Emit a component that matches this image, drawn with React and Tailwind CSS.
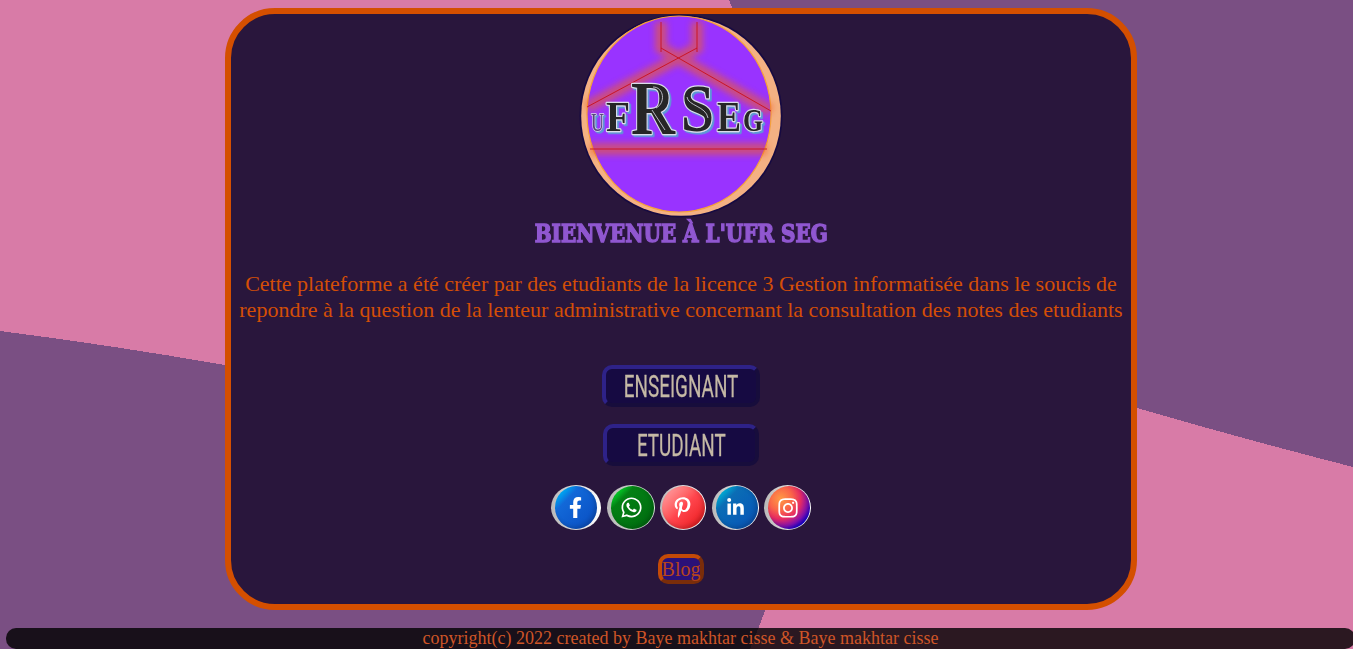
import { FaFacebookF, FaWhatsapp, FaPinterestP, FaLinkedinIn, FaInstagram } from 'react-icons/fa';

const beams = [
  'M661 22V52',
  'M697 22V52',
  'M661 48L771 111',
  'M697 48L587 107',
  'M590 149H767',
];

const letters = [
  { c: 'U', x: 591, y: 131, size: 25, w: 13, light: true },
  { c: 'F', x: 606, y: 131, size: 43, w: 24 },
  { c: 'R', x: 631, y: 134, size: 76, w: 44 },
  { c: 'S', x: 681, y: 131, size: 67, w: 33 },
  { c: 'E', x: 717, y: 131, size: 42, w: 24 },
  { c: 'G', x: 743, y: 131, size: 32, w: 20 },
];

function Logo() {
  return (
    <svg viewBox="579 14 204 204" className="block h-[204px] w-[204px] shrink-0" role="img" aria-label="UFR SEG">
      <defs>
        <filter id="glow" x="570" y="0" width="220" height="220" filterUnits="userSpaceOnUse">
          <feGaussianBlur stdDeviation="3" />
        </filter>
        <filter id="edge" x="570" y="60" width="220" height="100" filterUnits="userSpaceOnUse">
          <feDropShadow dx="1.8" dy="1.8" stdDeviation="0.3" floodColor="#5b9bd5" />
        </filter>
        <clipPath id="disc"><circle cx="681" cy="116" r="100" /></clipPath>
      </defs>
      <circle cx="681" cy="116" r="101.5" fill="#160a42" />
      <circle cx="681" cy="116" r="99.8" fill="#f4b183" />
      <ellipse cx="679" cy="114" rx="92" ry="98" fill="#9933ff" stroke="#f5a13a" strokeWidth="1.2" />
      <g clipPath="url(#disc)" fill="none">
        <g opacity="0.58">
          <g stroke="#f06028" strokeWidth="12" filter="url(#glow)">
            {beams.map((d) => <path key={d} d={d} />)}
          </g>
        </g>
        <g stroke="#c8101c" strokeWidth="0.9">
          {beams.map((d) => <path key={d} d={d} />)}
        </g>
      </g>
      <g fontFamily="'Liberation Serif', serif" strokeLinejoin="round" filter="url(#edge)">
        {letters.map((l) => (
          <text
            key={l.c}
            x={l.x}
            y={l.y}
            fontSize={l.size}
            fontWeight={l.light ? 400 : 700}
            textLength={l.w}
            lengthAdjust="spacingAndGlyphs"
            fill={l.light ? '#54447c' : '#262626'}
            stroke="#dcdcea"
            strokeWidth={l.light ? 1.6 : 2.4}
            paintOrder="stroke"
          >
            {l.c}
          </text>
        ))}
      </g>
      <g fill="none" stroke="#dcdcea" strokeWidth="0.8">
        <path d="M653 87C664 87 666 103 656 108M652 110L665 130" />
        <path d="M687 97C688 106 706 106 708 118" />
      </g>
    </svg>
  );
}

const socials = [
  { name: 'Facebook', Icon: FaFacebookF, box: 'w-[50px] bg-linear-to-r from-[#b9b9b9] to-white px-[4px]', ball: 'bg-linear-to-br from-[#00c4ff] from-8% via-[#1268d8] via-30% to-[#0a4cc0]', icon: 'size-[21px]' },
  { name: 'WhatsApp', Icon: FaWhatsapp, box: 'w-[48px] bg-linear-to-r from-[#b9b9b9] to-[#d9e6d9] pl-[4px] pr-px', ball: 'bg-linear-to-br from-[#00f030] from-8% via-[#048014] via-28% to-[#006a10]', icon: 'size-[23px]' },
  { name: 'Pinterest', Icon: FaPinterestP, box: 'w-[46px] bg-linear-to-r from-[#b9b9b9] to-white pl-[2px] pr-px', ball: 'bg-linear-to-br from-[#ff9ba0] from-8% via-[#ff454d] via-50% to-[#e80009]', icon: 'size-[21px]' },
  { name: 'LinkedIn', Icon: FaLinkedinIn, box: 'w-[47px] bg-linear-to-r from-[#b9b9b9] to-white pl-[4px] pr-px', ball: 'bg-linear-to-br from-[#00c6e0] from-8% via-[#0b6db5] via-30% to-[#0c50b8]', icon: 'size-[19px]' },
  { name: 'Instagram', Icon: FaInstagram, box: 'w-[47px] bg-linear-to-r from-[#b9b9b9] to-white pl-[4px] pr-px', ball: 'bg-[radial-gradient(circle_at_30%_30%,#ff9b45_0%,#fa6549_28%,#e52b62_48%,#8210b0_66%,#1600e0_78%)]', icon: 'size-[22px]' },
];

function RoleButton({ children, box, text }) {
  return (
    <button className={`flex h-[42px] items-center justify-center rounded-[10px] border-4 border-t-[#2e2288] border-l-[#2e2288] border-r-[#170d3c] border-b-[#170d3c] bg-[#160a42] ${box}`}>
      <span className={`block whitespace-nowrap font-['Roboto',sans-serif] text-[32px] leading-[34px] text-[#c5b9a5] [-webkit-text-stroke:0.3px_#c5b9a5] ${text}`}>{children}</span>
    </button>
  );
}

export default function App() {
  return (
    <div className="relative isolate h-[649px] w-full overflow-hidden bg-[#7a4f83] pt-2 font-['Liberation_Serif',serif] text-[#d44e06]">
      <svg viewBox="0 0 1353 649" className="absolute inset-0 -z-10 h-[649px] w-[1353px]" aria-hidden="true" shapeRendering="crispEdges">
        <path d="M0 0H729Q740 28 752 60L750 330L600 430Q350 382 225 365Q110 345 0 331Z" fill="#d87ba7" />
        <path d="M1353 467Q1240 438 1137 408L850 320L780 560Q774 585 765 610Q762 620 758 629L750 649H1353Z" fill="#d87ba7" />
      </svg>
      <main className="ml-[225px] flex h-[602px] w-[912px] flex-col items-center rounded-[50px] border-6 border-[#d44f00] bg-[#29163c]">
        <Logo />
        <h1 className="mt-[1px] flex h-[29px] w-[294px] items-center justify-center font-['DejaVu_Serif',serif] text-[25px] leading-[29px] font-bold whitespace-nowrap text-[#9057d0]">
          <span className="block scale-x-[0.8] [-webkit-text-stroke:1.5px_#9057d0]">BIENVENUE À L'UFR SEG</span>
        </h1>
        <p className="mt-[23px] text-center text-[22px] leading-[26px] whitespace-nowrap">
          Cette plateforme a été créer par des etudiants de la licence 3 Gestion informatisée dans le soucis de
          <br />
          repondre à la question de la lenteur administrative concernant la consultation des notes des etudiants
        </p>
        <div className="mt-[42px] flex flex-col items-center gap-[17px]">
          <RoleButton box="w-[158px]" text="scale-x-[0.59]">ENSEIGNANT</RoleButton>
          <RoleButton box="w-[156px]" text="scale-x-[0.59]">ETUDIANT</RoleButton>
        </div>
        <nav className="mt-[19px] flex h-[45px] w-[260px] justify-between">
          {socials.map(({ name, Icon, box, ball, icon }) => (
            <a key={name} aria-label={name} className={`flex h-[45px] rounded-[50%] py-px ${box}`}>
              <span className={`flex flex-1 items-center justify-center rounded-[50%] text-white shadow-[inset_-2px_-2px_4px_#00000030] ${ball}`}>
                <Icon className={`-translate-x-px ${icon}`} />
              </span>
            </a>
          ))}
        </nav>
        <a className="mt-6 flex h-[30px] w-[46px] items-center justify-center rounded-[10px] border-4 border-t-[#c44a07] border-l-[#c44a07] border-r-[#7a2d0a] border-b-[#7a2d0a] bg-[#2b1178] text-[20px] leading-[22px] text-[#b5441c]">Blog</a>
      </main>
      <footer className="mt-[18px] ml-[6px] h-[21px] w-[1349px] rounded-[10px] bg-black/80 text-center text-[18px] leading-[21px] text-[#cf5527]">
        copyright(c) 2022 created by Baye makhtar cisse &amp; Baye makhtar cisse
      </footer>
    </div>
  );
}
